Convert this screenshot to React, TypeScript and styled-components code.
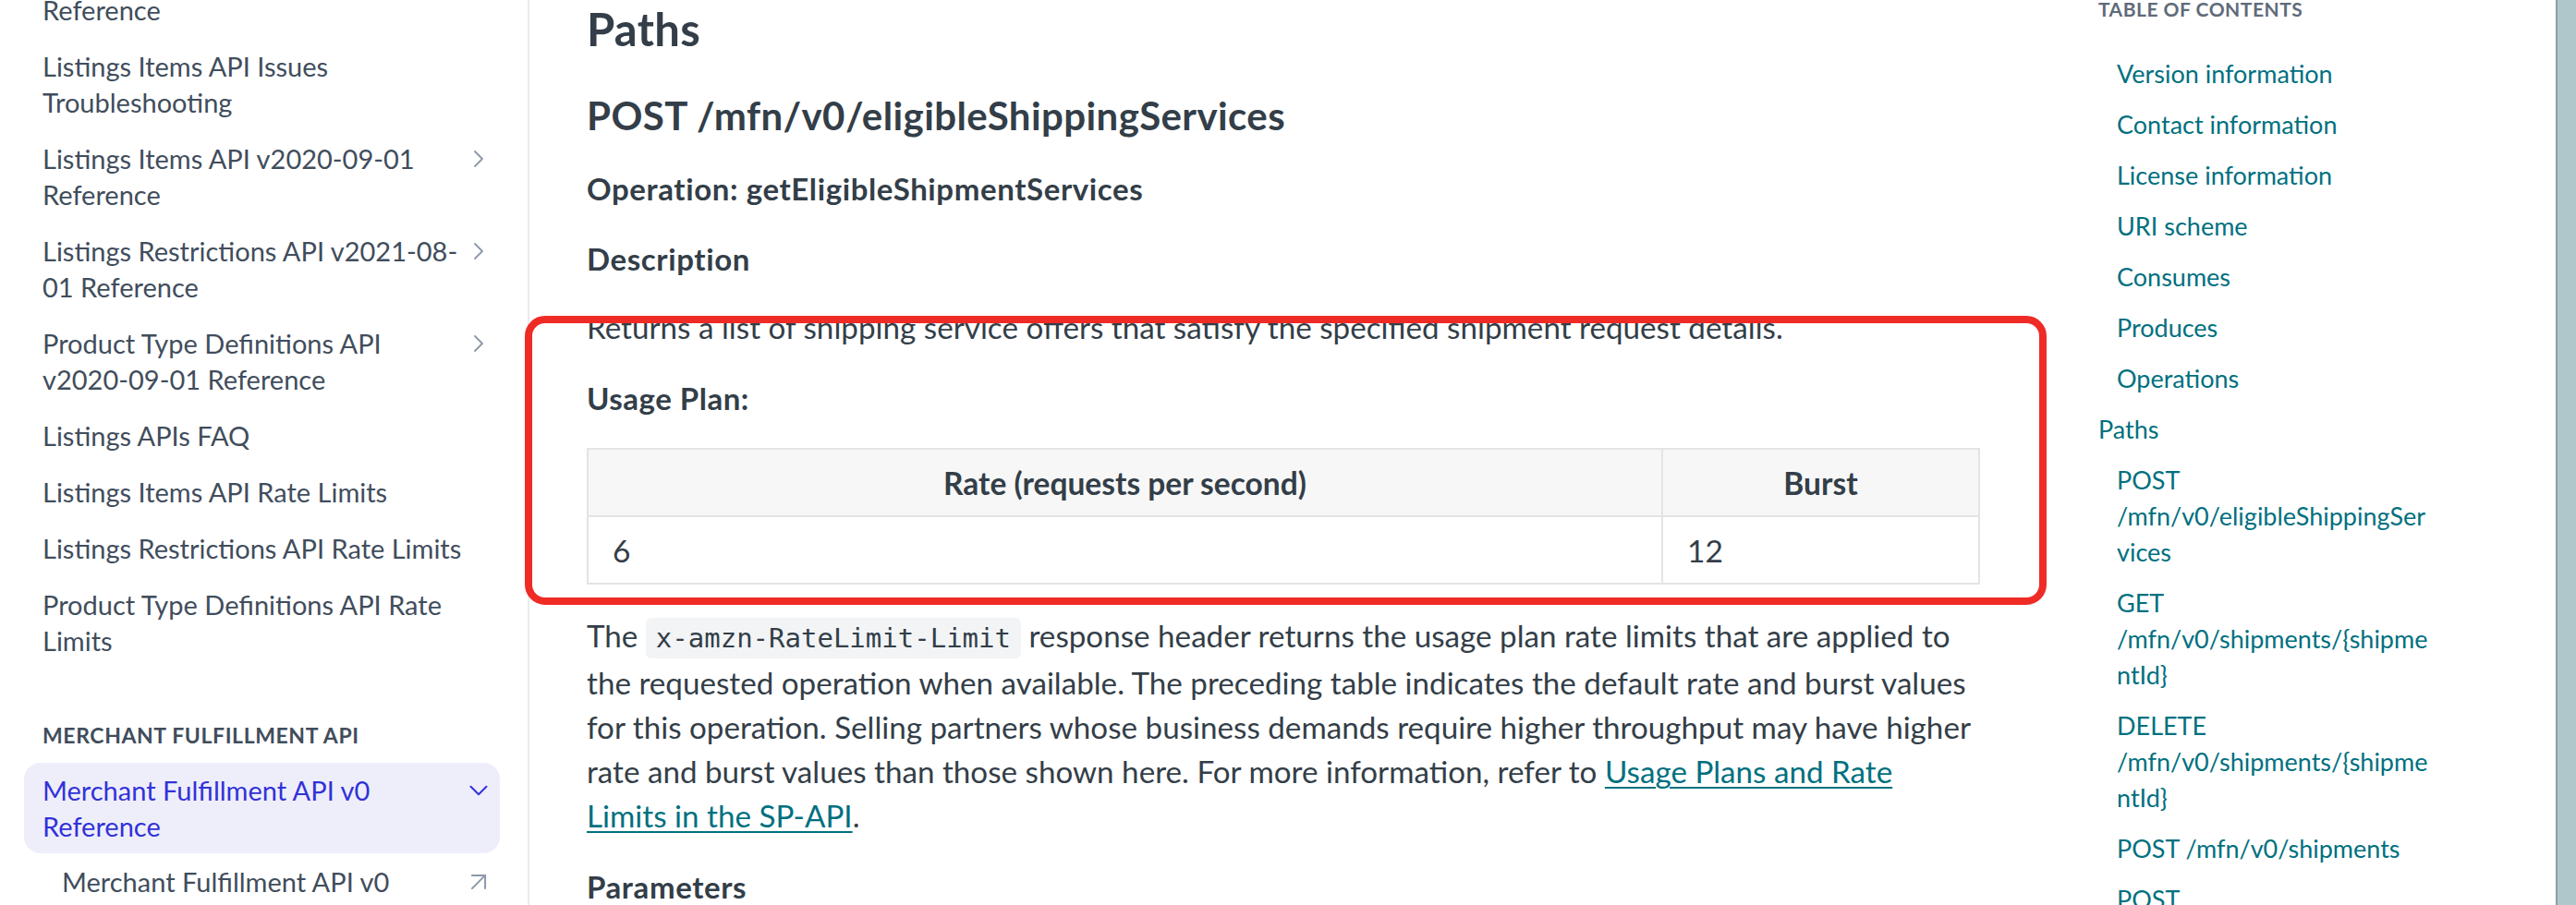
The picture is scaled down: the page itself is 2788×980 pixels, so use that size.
import React from "react";
import styled, { createGlobalStyle } from "styled-components";
import { ChevronRight, ChevronDown, ArrowUpRight } from "lucide-react";

const GlobalStyle = createGlobalStyle`
  body {
    margin: 0;
    background: #ffffff;
    font-family: Lato, "Liberation Sans", sans-serif;
  }
`;

type NavEntry = {
  label: string;
  arrow?: "right" | "down" | "out";
  active?: boolean;
  sub?: boolean;
};

const topItems: NavEntry[] = [
  { label: "Listings Items API v2021-08-01 Reference" },
  { label: "Listings Items API Issues Troubleshooting" },
  { label: "Listings Items API v2020-09-01 Reference", arrow: "right" },
  { label: "Listings Restrictions API v2021-08-01 Reference", arrow: "right" },
  { label: "Product Type Definitions API v2020-09-01 Reference", arrow: "right" },
  { label: "Listings APIs FAQ" },
  { label: "Listings Items API Rate Limits" },
  { label: "Listings Restrictions API Rate Limits" },
  { label: "Product Type Definitions API Rate Limits" },
];

const merchantItems: NavEntry[] = [
  { label: "Merchant Fulfillment API v0 Reference", arrow: "down", active: true },
  { label: "Merchant Fulfillment API v0", arrow: "out", sub: true },
];

const tocItems = [
  { label: "Version information", nested: true },
  { label: "Contact information", nested: true },
  { label: "License information", nested: true },
  { label: "URI scheme", nested: true },
  { label: "Consumes", nested: true },
  { label: "Produces", nested: true },
  { label: "Operations", nested: true },
  { label: "Paths", nested: false },
  { label: "POST /mfn/v0/eligibleShippingServices", nested: true },
  { label: "GET /mfn/v0/shipments/{shipmentId}", nested: true },
  { label: "DELETE /mfn/v0/shipments/{shipmentId}", nested: true },
  { label: "POST /mfn/v0/shipments", nested: true },
  { label: "POST /mfn/v0/shipments/{shipmentId}/cancel", nested: true },
];

const NavRow = ({ item }: { item: NavEntry }) => (
  <NavItem $active={item.active} $sub={item.sub}>
    <NavLabel>{item.label}</NavLabel>
    <IconSlot $active={item.active}>
      {item.arrow === "right" && <ChevronRight size={32} strokeWidth={1.4} />}
      {item.arrow === "down" && <ChevronDown size={34} strokeWidth={1.4} />}
      {item.arrow === "out" && <ArrowUpRight size={34} strokeWidth={1.4} />}
    </IconSlot>
  </NavItem>
);

const App = () => {
  return (
    <>
      <GlobalStyle />
      <Page>
        <Sidebar>
          <NavList>
            {topItems.map((item) => (
              <NavRow key={item.label} item={item} />
            ))}
            <SectionTitle>Merchant Fulfillment API</SectionTitle>
            {merchantItems.map((item) => (
              <NavRow key={item.label + item.arrow} item={item} />
            ))}
          </NavList>
        </Sidebar>

        <Main>
          <PageTitle>Paths</PageTitle>
          <Endpoint>POST /mfn/v0/eligibleShippingServices</Endpoint>
          <SubHeading $gap={35}>Operation: getEligibleShipmentServices</SubHeading>
          <SubHeading $gap={36}>Description</SubHeading>
          <Para $gap={30}>
            Returns a list of shipping service offers that satisfy the specified
            shipment request details.
          </Para>
          <Para $gap={29}>
            <strong>Usage Plan:</strong>
          </Para>
          <RateTable>
            <thead>
              <tr>
                <Th $wide>Rate (requests per second)</Th>
                <Th>Burst</Th>
              </tr>
            </thead>
            <tbody>
              <tr>
                <Td>6</Td>
                <Td>12</Td>
              </tr>
            </tbody>
          </RateTable>
          <Para $gap={31}>
            The <Code>x-amzn-RateLimit-Limit</Code> response header returns the
            usage plan rate limits that are applied to
            <br />
            the requested operation when available. The preceding table
            indicates the default rate and burst values
            <br />
            for this operation. Selling partners whose business demands require
            higher throughput may have higher
            <br />
            rate and burst values than those shown here. For more information,
            refer to{" "}
            <DocLink href="#">
              Usage Plans and Rate
              <br />
              Limits in the SP-API
            </DocLink>
            .
          </Para>
          <SubHeading $gap={33}>Parameters</SubHeading>
          <Highlight />
        </Main>

        <Toc>
          <TocTitle>Table of contents</TocTitle>
          <TocList>
            {tocItems.map((t) => (
              <TocItem key={t.label} $nested={t.nested}>
                {t.label}
              </TocItem>
            ))}
          </TocList>
        </Toc>

        <ScrollTrack />
      </Page>
    </>
  );
};

export default App;

const Page = styled.div`
  display: flex;
  width: 2788px;
  height: 980px;
  overflow: hidden;
`;

const Sidebar = styled.nav`
  width: 573px;
  flex-shrink: 0;
  box-sizing: border-box;
  border-right: 2px solid #e9ebed;
  padding-left: 26px;
  overflow: hidden;
`;

const NavList = styled.div`
  width: 515px;
  margin-top: -59px;
`;

const NavItem = styled.div<{ $active?: boolean; $sub?: boolean }>`
  display: flex;
  align-items: flex-start;
  padding: ${(p) => (p.$active ? "10px" : "11px")} 8px
    ${(p) => (p.$active ? "10px" : "11px")} ${(p) => (p.$sub ? "41px" : "20px")};
  border-radius: 18px;
  background: ${(p) => (p.$active ? "#eeeefb" : "transparent")};
  color: ${(p) => (p.$active ? "#3232d8" : "#414d5c")};
  font-size: 29px;
  line-height: 39px;
`;

const NavLabel = styled.span`
  flex: 1;
`;

const IconSlot = styled.span<{ $active?: boolean }>`
  width: 30px;
  height: 39px;
  display: flex;
  align-items: center;
  justify-content: center;
  flex-shrink: 0;
  color: ${(p) => (p.$active ? "#3232d8" : "#8d99a8")};

  svg {
    flex-shrink: 0;
  }
`;

const SectionTitle = styled.div`
  margin: 57px 0 15px 20px;
  font-size: 23px;
  line-height: 30px;
  font-weight: 700;
  text-transform: uppercase;
  letter-spacing: 0.6px;
  color: #414d5c;
`;

const Main = styled.main`
  position: relative;
  width: 1667px;
  flex-shrink: 0;
  box-sizing: border-box;
  padding: 3px 97px 0 62px;
  color: #333e48;
`;

const PageTitle = styled.h2`
  margin: 0;
  font-size: 49px;
  line-height: 56px;
  font-weight: 700;
  letter-spacing: 0.3px;
`;

const Endpoint = styled.h3`
  margin: 42px 0 0;
  font-size: 42px;
  line-height: 48px;
  font-weight: 700;
  letter-spacing: 0.4px;
`;

const SubHeading = styled.h4<{ $gap: number }>`
  margin: ${(p) => p.$gap}px 0 0;
  font-size: 33px;
  line-height: 40px;
  font-weight: 700;
  letter-spacing: 0.6px;
`;

const Para = styled.p<{ $gap: number }>`
  margin: ${(p) => p.$gap}px 0 0;
  font-size: 33.2px;
  line-height: 48px;

  strong {
    font-weight: 700;
    font-size: 33px;
    letter-spacing: 0.5px;
  }
`;

const RateTable = styled.table`
  width: 100%;
  margin-top: 30px;
  border-collapse: collapse;
  font-size: 33.5px;
`;

const Th = styled.th<{ $wide?: boolean }>`
  width: ${(p) => (p.$wide ? "1109px" : "auto")};
  height: 71px;
  padding: 0 26px;
  border: 2px solid #e4e4e4;
  background: #f7f7f7;
  font-weight: 700;
  text-align: center;
`;

const Td = styled.td`
  height: 71px;
  padding: 0 26px;
  border: 2px solid #e4e4e4;
`;

const Code = styled.code`
  font-family: "DejaVu Sans Mono", "Liberation Mono", monospace;
  font-size: 29px;
  background: #f2f4f6;
  border-radius: 6px;
  padding: 5px 11px;
`;

const DocLink = styled.a`
  color: #00707f;
  text-decoration: underline;
  text-underline-offset: 4px;
  text-decoration-thickness: 2px;
`;

const Highlight = styled.div`
  position: absolute;
  left: -5px;
  top: 342px;
  width: 1647px;
  height: 313px;
  box-sizing: border-box;
  border: 8px solid #ef2b26;
  border-radius: 22px;
  pointer-events: none;
`;

const Toc = styled.aside`
  width: 526px;
  flex-shrink: 0;
  box-sizing: border-box;
  padding-left: 31px;
`;

const TocTitle = styled.div`
  margin-top: -5px;
  font-size: 21px;
  line-height: 30px;
  font-weight: 700;
  text-transform: uppercase;
  letter-spacing: 0.5px;
  color: #5f6b7a;
`;

const TocList = styled.div`
  margin-top: 27px;
`;

const TocItem = styled.div<{ $nested: boolean }>`
  width: 346px;
  padding: 8px 0 8px ${(p) => (p.$nested ? "20px" : "0")};
  font-size: 27px;
  line-height: 39px;
  color: #00707f;
  overflow-wrap: anywhere;
`;

const ScrollTrack = styled.div`
  width: 22px;
  flex-shrink: 0;
  box-sizing: border-box;
  border-left: 2px solid #8d9fa3;
  background: #afc7cb;
`;
